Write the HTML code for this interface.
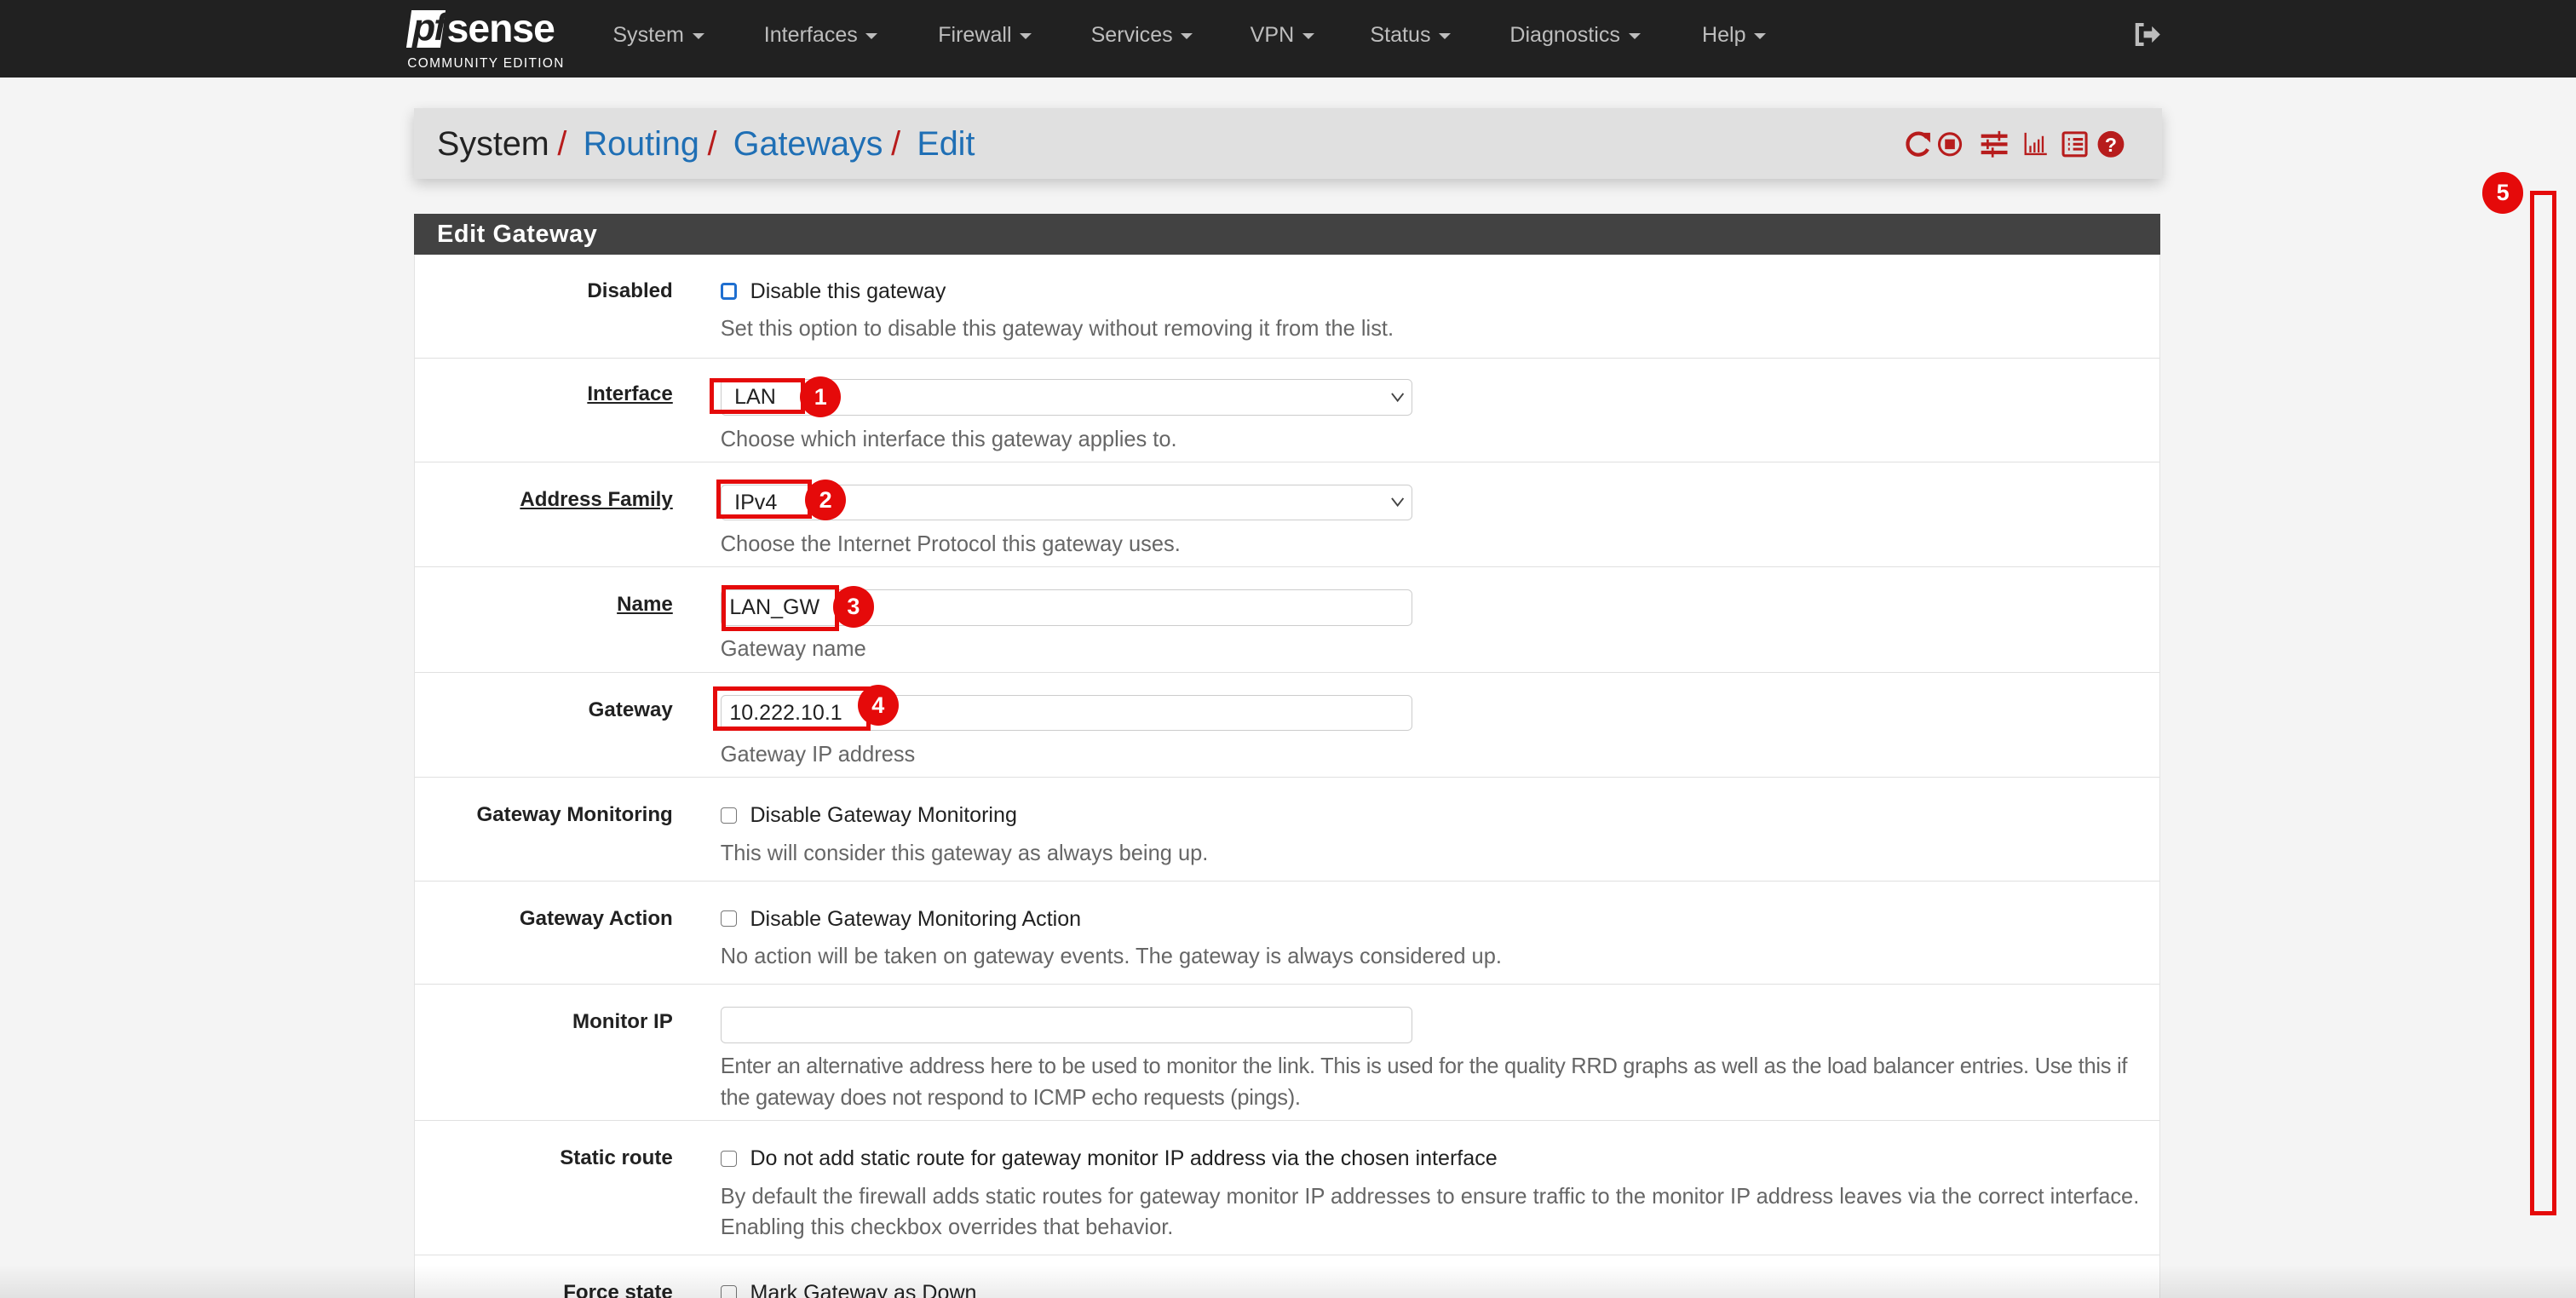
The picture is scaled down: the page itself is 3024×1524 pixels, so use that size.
<!DOCTYPE html>
<html><head><meta charset="utf-8"><style>
html,body{margin:0;padding:0;overflow:hidden}
body{width:1568px;height:790px;background:#f4f4f4;font-family:"Liberation Sans",sans-serif;zoom:1.92857;position:relative}
.a{position:absolute}
.nav{left:0;top:0;width:1568px;height:47px;background:#212121}
.nav .m{position:absolute;top:14px;color:#bdbdbd;font-size:13px}
.caret{display:inline-block;border-left:4px solid transparent;border-right:4px solid transparent;border-top:4px solid #bdbdbd;vertical-align:middle;margin-left:5px}
.bc{left:252px;top:66px;width:1064px;height:43px;background:#e0e0e0;box-shadow:0 3px 8px rgba(0,0,0,.2)}
.bc .t{position:absolute;left:14px;top:10px;font-size:20.5px;color:#222;white-space:nowrap}
.bc .t span{color:#1f6fb5}.bc .t i{font-style:normal;color:#b71c1c;margin:0 10px 0 5px}
.ph{left:252px;top:130px;width:1063px;height:25px;background:#424242;color:#fff;font-weight:bold;font-size:15px;line-height:25px;text-indent:14px;letter-spacing:.3px}
.pb{left:252px;top:155px;width:1062px;height:640px;background:#fff;border-left:1px solid #e3e3e3;border-right:1px solid #e3e3e3}
.row{position:absolute;left:0;width:1062px;border-bottom:1px solid #e0e0e0}
.lb{position:absolute;right:905px;font-weight:bold;font-size:12.5px;color:#212121;white-space:nowrap}
.lb.u{text-decoration:underline}
.ct{position:absolute;left:186px;font-size:13px;color:#212121;white-space:nowrap}
.hp{position:absolute;left:186px;font-size:13.2px;color:#666;line-height:19px;width:868px}
.in{position:absolute;left:186px;width:420px;height:21px;border:1px solid #ccc;border-radius:3px;background:#fff;font-size:13px;line-height:21px;text-indent:8px;color:#222;box-sizing:content-box}
.cb{display:inline-block;width:9px;height:9px;border:1px solid #777;border-radius:2px;vertical-align:-1px;margin-right:8px}
.chev{position:absolute;right:4px;top:7px}
.rb{position:absolute;border:3px solid #e50a0a;box-sizing:border-box}
.bd{position:absolute;width:25px;height:25px;border-radius:50%;background:#e50a0a;color:#fff;font-weight:bold;font-size:14px;text-align:center;line-height:25px}
</style></head><body>
<div class="a nav">
  <div class="a" style="left:249px;top:6px;width:21px;height:23px;background:#fff;transform:skewX(-8deg)"></div>
  <div class="a" style="left:251px;top:4px;font-size:23px;font-weight:bold;font-style:italic;color:#212121;letter-spacing:-1px">pf</div>
  <div class="a" style="left:272px;top:3px;font-size:24px;font-weight:bold;color:#fff;letter-spacing:-0.5px">sense</div>
  <div class="a" style="left:248px;top:34px;font-size:8px;color:#fff;letter-spacing:.7px">COMMUNITY EDITION</div>
  <div class="m" style="left:373px">System<span class="caret"></span></div>
  <div class="m" style="left:465px">Interfaces<span class="caret"></span></div>
  <div class="m" style="left:571px">Firewall<span class="caret"></span></div>
  <div class="m" style="left:664px">Services<span class="caret"></span></div>
  <div class="m" style="left:761px">VPN<span class="caret"></span></div>
  <div class="m" style="left:834px">Status<span class="caret"></span></div>
  <div class="m" style="left:919px">Diagnostics<span class="caret"></span></div>
  <div class="m" style="left:1036px">Help<span class="caret"></span></div>
  <svg class="a" style="left:1299px;top:14px" width="17" height="14" viewBox="0 0 17 14"><path d="M6 1H2v12h4" stroke="#bdbdbd" stroke-width="2.2" fill="none"/><path d="M6 5h5V2l5 5-5 5V9H6z" fill="#bdbdbd"/></svg>
</div>
<div class="a bc">
  <div class="t">System<i>/</i><span>Routing</span><i>/</i><span>Gateways</span><i>/</i><span>Edit</span></div>
  <svg class="a" style="left:907px;top:13px" width="150" height="18" viewBox="0 0 150 18">
    <g fill="none" stroke="#b71c1c" stroke-width="2.2"><path d="M14 5A6.5 6.5 0 1 0 14.5 12"/></g><path d="M10 2h6v6z" fill="#b71c1c"/>
    <circle cx="28" cy="9" r="6.5" fill="none" stroke="#b71c1c" stroke-width="1.6"/><rect x="25" y="6" width="6" height="6" fill="#b71c1c"/>
    <g stroke="#b71c1c" stroke-width="2.2"><path d="M47 4h16M47 9h16M47 14h16"/></g><g stroke="#b71c1c" stroke-width="1.4"><path d="M58 1v6M51 6v6M54 11v6"/></g>
    <g stroke="#b71c1c" stroke-width="1.2" fill="none"><path d="M74 2v13h13"/><path d="M77 14v-4M79.5 14v-6M82 14v-8M84.5 14v-10"/></g>
    <rect x="97" y="2" width="14" height="14" rx="1" fill="none" stroke="#b71c1c" stroke-width="1.6"/><g stroke="#b71c1c" stroke-width="1.6"><path d="M100 6h1M103 6h6M100 9h1M103 9h6M100 12h1M103 12h6"/></g>
    <circle cx="126" cy="9" r="8" fill="#b71c1c"/><text x="126" y="13.5" font-size="12" font-weight="bold" fill="#fff" text-anchor="middle" font-family="Liberation Sans">?</text>
  </svg>
</div>
<div class="a ph">Edit Gateway</div>
<div class="a pb">
  <div class="row" style="top:0;height:63px"><div class="lb" style="top:15px">Disabled</div><div class="ct" style="top:15px"><span class="cb" style="border:2px solid #1f6fd0;width:7px;height:7px"></span>Disable this gateway</div><div class="hp" style="top:36px">Set this option to disable this gateway without removing it from the list.</div></div>
  <div class="row" style="top:63px;height:63px"><div class="lb u" style="top:15px">Interface</div><div class="in" style="top:13px">LAN<svg class="chev" width="9" height="7" viewBox="0 0 9 7"><path d="M1 1l3.5 4.5L8 1" stroke="#444" fill="none"/></svg></div><div class="hp" style="top:40px">Choose which interface this gateway applies to.</div></div>
  <div class="row" style="top:127px;height:63px"><div class="lb u" style="top:15px">Address Family</div><div class="in" style="top:13px">IPv4<svg class="chev" width="9" height="7" viewBox="0 0 9 7"><path d="M1 1l3.5 4.5L8 1" stroke="#444" fill="none"/></svg></div><div class="hp" style="top:40px">Choose the Internet Protocol this gateway uses.</div></div>
  <div class="row" style="top:191px;height:63px"><div class="lb u" style="top:15px">Name</div><div class="in" style="top:13px;text-indent:5px">LAN_GW</div><div class="hp" style="top:40px">Gateway name</div></div>
  <div class="row" style="top:255px;height:63px"><div class="lb" style="top:15px">Gateway</div><div class="in" style="top:13px;text-indent:5px">10.222.10.1</div><div class="hp" style="top:40px">Gateway IP address</div></div>
  <div class="row" style="top:319px;height:62px"><div class="lb" style="top:15px">Gateway Monitoring</div><div class="ct" style="top:15px"><span class="cb"></span>Disable Gateway Monitoring</div><div class="hp" style="top:36px">This will consider this gateway as always being up.</div></div>
  <div class="row" style="top:382px;height:62px"><div class="lb" style="top:15px">Gateway Action</div><div class="ct" style="top:15px"><span class="cb"></span>Disable Gateway Monitoring Action</div><div class="hp" style="top:36px">No action will be taken on gateway events. The gateway is always considered up.</div></div>
  <div class="row" style="top:445px;height:82px"><div class="lb" style="top:15px">Monitor IP</div><div class="in" style="top:13px"></div><div class="hp" style="top:40px;width:875px;letter-spacing:-0.15px">Enter an alternative address here to be used to monitor the link. This is used for the quality RRD graphs as well as the load balancer entries. Use this if the gateway does not respond to ICMP echo requests (pings).</div></div>
  <div class="row" style="top:528px;height:81px"><div class="lb" style="top:15px">Static route</div><div class="ct" style="top:15px"><span class="cb"></span>Do not add static route for gateway monitor IP address via the chosen interface</div><div class="hp" style="top:36px">By default the firewall adds static routes for gateway monitor IP addresses to ensure traffic to the monitor IP address leaves via the correct interface. Enabling this checkbox overrides that behavior.</div></div>
  <div class="row" style="top:610px;height:60px;border:none"><div class="lb" style="top:15px">Force state</div><div class="ct" style="top:15px"><span class="cb"></span>Mark Gateway as Down</div></div>
</div>
<div class="rb" style="left:432px;top:230px;width:58px;height:22px"></div><div class="bd" style="left:487px;top:229px">1</div>
<div class="rb" style="left:436px;top:292px;width:58px;height:24px"></div><div class="bd" style="left:490px;top:292px">2</div>
<div class="rb" style="left:439px;top:356px;width:72px;height:28px"></div><div class="bd" style="left:507px;top:357px">3</div>
<div class="rb" style="left:434px;top:418px;width:96px;height:27px"></div><div class="bd" style="left:522px;top:417px">4</div>
<div class="bd" style="left:1511px;top:105px">5</div>
<div class="rb" style="left:1540px;top:116px;width:16px;height:624px"></div>
<div class="a" style="left:0;top:770px;width:1568px;height:20px;background:linear-gradient(rgba(0,0,0,0),rgba(0,0,0,.08))"></div>
</body></html>
